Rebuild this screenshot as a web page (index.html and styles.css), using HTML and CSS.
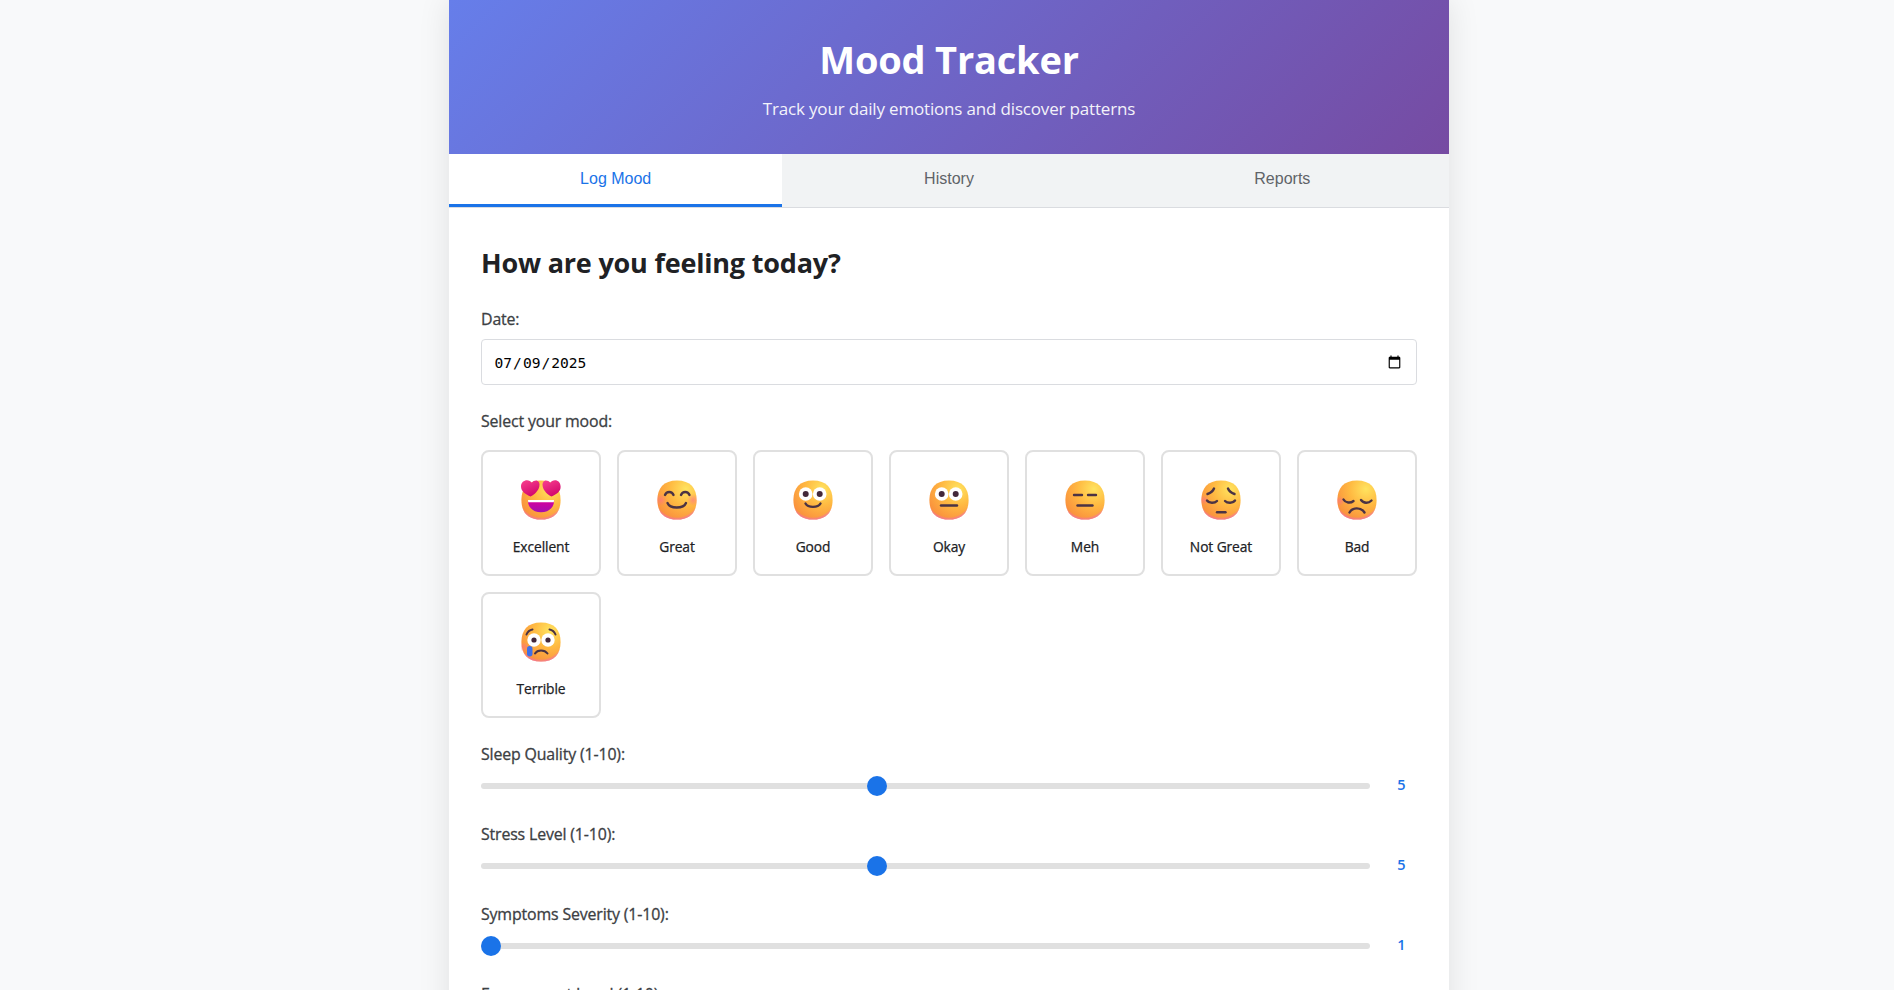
FILE: index.html
```html
<!DOCTYPE html>
<html lang="en">
<head>
  <meta charset="UTF-8">
  <meta name="viewport" content="width=device-width, initial-scale=1.0">
  <title>Mood Tracker</title>
  <link rel="stylesheet" href="styles.css">
</head>
<body>
  <!-- shared gradients and face shape for the mood icons -->
  <svg class="svg-defs" aria-hidden="true">
    <defs>
      <radialGradient id="faceFill" gradientUnits="userSpaceOnUse" cx="29" cy="9" r="36">
        <stop offset="0" stop-color="#ffe35f"/>
        <stop offset="0.45" stop-color="#ffba42"/>
        <stop offset="1" stop-color="#f98a3c"/>
      </radialGradient>
      <radialGradient id="faceRim" gradientUnits="userSpaceOnUse" cx="20" cy="15" r="25.5">
        <stop offset="0.86" stop-color="#f472b0" stop-opacity="0"/>
        <stop offset="1" stop-color="#f06eb4"/>
      </radialGradient>
      <radialGradient id="blush">
        <stop offset="0" stop-color="#ff6f8e" stop-opacity="0.6"/>
        <stop offset="1" stop-color="#ff6f8e" stop-opacity="0"/>
      </radialGradient>
      <linearGradient id="heartFill" x1="0" y1="0" x2="0.5" y2="1">
        <stop offset="0" stop-color="#f9408f"/>
        <stop offset="1" stop-color="#d3086e"/>
      </linearGradient>
      <linearGradient id="mouthFill" x1="0" y1="0" x2="0" y2="1">
        <stop offset="0" stop-color="#d9009a"/>
        <stop offset="1" stop-color="#a30fb0"/>
      </linearGradient>
      <g id="face">
        <path fill="url(#faceFill)" d="M20 .4C33.500 .4 39.600 8 39.600 20 39.600 32 33.500 39.600 20 39.600 6.500 39.600 .4 32 .4 20 .4 8 6.500 .4 20 .4Z"/>
        <path fill="url(#faceRim)" d="M20 .4C33.500 .4 39.600 8 39.600 20 39.600 32 33.500 39.600 20 39.600 6.500 39.600 .4 32 .4 20 .4 8 6.500 .4 20 .4Z"/>
      </g>
    </defs>
  </svg>

  <div class="container">
    <header class="app-header">
      <h1>Mood Tracker</h1>
      <p>Track your daily emotions and discover patterns</p>
    </header>

    <nav class="tabs">
      <button class="tab active">Log Mood</button>
      <button class="tab">History</button>
      <button class="tab">Reports</button>
    </nav>

    <main class="content">
      <h2>How are you feeling today?</h2>

      <div class="form-group date-group">
        <label for="moodDate">Date:</label>
        <input type="date" id="moodDate" value="2025-07-09">
      </div>

      <div class="form-group">
        <label class="mood-label">Select your mood:</label>
        <div class="mood-grid">
          <div class="mood-card">
            <div class="mood-emoji">
              <svg viewBox="0 0 40 40">
                <use href="#face"/>
                <path fill="url(#mouthFill)" d="M7 20H33C33.500 27 28 32.300 20 32.300 12 32.300 6.500 27 7 20Z"/>
                <path fill="#fff" d="M7 20H33L32.800 22.300H7.200Z"/>
                <path fill="url(#heartFill)" d="M9.500 16.500C5 14.500 0 11.500 0 6.500 0 2.500 3 .3 6 .3 8 .3 9.800 1.300 10.800 2.800 12 1.300 13.800 .4 15.500 .6 18 1 19 3.500 18.300 6.500 17.300 11 13.500 14.500 9.500 16.500Z"/>
                <path fill="url(#heartFill)" d="M30.500 16.500C35 14.500 40 11.500 39.600 6.500 39.400 2.500 37 .3 34 .3 32 .3 30.200 1.300 29.200 2.800 28 1.300 26.200 .4 24.500 .6 22 1 21 3.500 21.700 6.500 22.700 11 26.500 14.500 30.500 16.500Z"/>
              </svg>
            </div>
            <span class="mood-name">Excellent</span>
          </div>

          <div class="mood-card">
            <div class="mood-emoji">
              <svg viewBox="0 0 40 40">
                <use href="#face"/>
                <circle cx="4" cy="20" r="6" fill="url(#blush)"/>
                <circle cx="36" cy="20" r="6" fill="url(#blush)"/>
                <g class="feature">
                  <path d="M8 15C9.500 11 15 11 16.500 15"/>
                  <path d="M24 15C25.500 11 31 11 32.500 15"/>
                  <path d="M10.500 23C13 29 26.500 29 29 23"/>
                </g>
              </svg>
            </div>
            <span class="mood-name">Great</span>
          </div>

          <div class="mood-card">
            <div class="mood-emoji">
              <svg viewBox="0 0 40 40">
                <use href="#face"/>
                <circle class="eye" cx="12.700" cy="14" r="6.800"/>
                <circle class="eye" cx="26.700" cy="14" r="6.800"/>
                <circle class="pupil" cx="12.700" cy="14" r="3"/>
                <circle class="pupil" cx="26.700" cy="14" r="3"/>
                <path class="feature" d="M12.500 23.500C15 28 25 28 27.500 23.500"/>
              </svg>
            </div>
            <span class="mood-name">Good</span>
          </div>

          <div class="mood-card">
            <div class="mood-emoji">
              <svg viewBox="0 0 40 40">
                <use href="#face"/>
                <circle class="eye" cx="12.700" cy="14" r="6.800"/>
                <circle class="eye" cx="26.700" cy="14" r="6.800"/>
                <circle class="pupil" cx="12.700" cy="14" r="3"/>
                <circle class="pupil" cx="26.700" cy="14" r="3"/>
                <path class="feature" d="M12 25.500H28"/>
              </svg>
            </div>
            <span class="mood-name">Okay</span>
          </div>

          <div class="mood-card">
            <div class="mood-emoji">
              <svg viewBox="0 0 40 40">
                <use href="#face"/>
                <g class="feature">
                  <path d="M9 15H17"/>
                  <path d="M23 15H31"/>
                  <path d="M12.500 25.500H27.500"/>
                </g>
              </svg>
            </div>
            <span class="mood-name">Meh</span>
          </div>

          <div class="mood-card">
            <div class="mood-emoji">
              <svg viewBox="0 0 40 40">
                <use href="#face"/>
                <circle cx="3" cy="20" r="5" fill="url(#blush)"/>
                <g class="feature">
                  <path d="M13 8.500C12 11 9.500 13 6.500 14"/>
                  <path d="M27 8.500C28 11 30.500 13 33.500 14"/>
                  <path d="M6 20.500C8 23.500 13.500 23.500 16 21"/>
                  <path d="M24 21C26.500 23.500 32 23.500 34 20.500"/>
                  <path d="M16 32.300H24.500"/>
                </g>
              </svg>
            </div>
            <span class="mood-name">Not Great</span>
          </div>

          <div class="mood-card">
            <div class="mood-emoji">
              <svg viewBox="0 0 40 40">
                <use href="#face"/>
                <circle cx="3" cy="21" r="5" fill="url(#blush)"/>
                <g class="feature">
                  <path d="M6.500 19.500C8.500 23 13.500 23.500 16.500 21"/>
                  <path d="M24 20C26.500 23.500 31.500 23.500 34.500 20.500"/>
                  <path d="M12.500 32.500C15.500 27 24 27 27.500 32.500"/>
                </g>
              </svg>
            </div>
            <span class="mood-name">Bad</span>
          </div>

          <div class="mood-card">
            <div class="mood-emoji">
              <svg viewBox="0 0 40 40">
                <use href="#face"/>
                <circle cx="3" cy="25" r="5" fill="url(#blush)"/>
                <circle class="eye" cx="13" cy="18" r="6.700"/>
                <circle class="eye" cx="27" cy="18" r="6.700"/>
                <circle class="pupil" cx="13" cy="18" r="2.600"/>
                <circle class="pupil" cx="27" cy="18" r="2.600"/>
                <g class="feature thin">
                  <path d="M11.500 7.500C8.500 8 6.500 10 5.500 12.500"/>
                  <path d="M28.500 7.500C31.500 8 33.500 10 34.500 12.500"/>
                  <path d="M14 31.500C16.500 27.500 23.500 27.500 26.500 31.500"/>
                </g>
                <rect x="6" y="24" width="5.500" height="10.500" rx="2.700" fill="#3f6fe8"/>
              </svg>
            </div>
            <span class="mood-name">Terrible</span>
          </div>
        </div>
      </div>

      <div class="form-group">
        <label for="sleep">Sleep Quality (1-10):</label>
        <div class="slider-row">
          <input type="range" id="sleep" min="1" max="10" value="5">
          <span class="slider-value">5</span>
        </div>
      </div>

      <div class="form-group">
        <label for="stress">Stress Level (1-10):</label>
        <div class="slider-row">
          <input type="range" id="stress" min="1" max="10" value="5">
          <span class="slider-value">5</span>
        </div>
      </div>

      <div class="form-group">
        <label for="symptoms">Symptoms Severity (1-10):</label>
        <div class="slider-row">
          <input type="range" id="symptoms" min="1" max="10" value="1">
          <span class="slider-value">1</span>
        </div>
      </div>

      <div class="form-group">
        <label for="engagement">Engagement Level (1-10):</label>
        <div class="slider-row">
          <input type="range" id="engagement" min="1" max="10" value="5">
          <span class="slider-value">5</span>
        </div>
      </div>
    </main>
  </div>
</body>
</html>
```

FILE: styles.css
```css
* {
  box-sizing: border-box;
}

body {
  font-family: 'Open Sans', 'Noto Sans', sans-serif;
  margin: 0;
  padding: 0 0 0 4px;
  background: #f8f9fa;
  color: #202124;
  line-height: 1.6;
}

.svg-defs {
  position: absolute;
  width: 0;
  height: 0;
}

.container {
  width: 1000px;
  margin: 0 auto;
  background: #ffffff;
  box-shadow: 0 0 30px rgba(0, 0, 0, 0.1);
}

/* header */
.app-header {
  background: linear-gradient(135deg, #667eea, #764ba2);
  color: #ffffff;
  text-align: center;
  padding: 31px 32px 32px;
}

.app-header h1 {
  margin: 0 0 9px;
  font-size: 38px;
  line-height: 56px;
  font-weight: 700;
  letter-spacing: -0.2px;
}

.app-header p {
  margin: 0;
  font-size: 17px;
  line-height: 26px;
  font-weight: 400;
  letter-spacing: -0.17px;
  opacity: 0.92;
}

/* tabs */
.tabs {
  display: flex;
  background: #f1f3f4;
  border-bottom: 1px solid #dadce0;
}

.tab {
  flex: 1;
  padding: 16px;
  border: none;
  border-bottom: 3px solid transparent;
  background: none;
  font-family: 'Liberation Sans', Arial, sans-serif;
  font-size: 16px;
  color: #5f6368;
}

.tab.active {
  background: #ffffff;
  color: #1a73e8;
  border-bottom-color: #1a73e8;
}

/* log mood form */
.content {
  padding: 32px;
}

.content h2 {
  margin: 0 0 22px;
  font-size: 27px;
  line-height: 45px;
  font-weight: 700;
  letter-spacing: -0.2px;
}

.form-group {
  margin-bottom: 24px;
}

/* Open Sans has no medium cut here, so the stroke thickens the regular */
.form-group label {
  display: block;
  margin-bottom: 8px;
  font-size: 15.900px;
  line-height: 25.6px;
  font-weight: 400;
  color: #3c4043;
  letter-spacing: -0.15px;
  -webkit-text-stroke: 0.3px #3c4043;
}

.date-group label {
  margin-bottom: 6px;
}

.form-group .mood-label {
  margin-bottom: 15px;
}

input[type="date"] {
  display: block;
  width: 100%;
  height: 46.4px;
  padding: 13px 12px 11px 11.500px;
  border: 1px solid #dadce0;
  border-radius: 4px;
  background: #ffffff;
  font-family: 'DejaVu Sans Mono', monospace;
  font-size: 14.600px;
  color: #000000;
}

.mood-grid {
  display: grid;
  grid-template-columns: repeat(auto-fit, minmax(120px, 1fr));
  gap: 16px;
}

.mood-card {
  display: flex;
  flex-direction: column;
  align-items: center;
  padding: 16px;
  border: 2px solid #e0e0e0;
  border-radius: 8px;
  background: #ffffff;
}

.mood-emoji {
  display: flex;
  justify-content: center;
  align-items: center;
  height: 64px;
  margin-bottom: 4px;
}

.mood-emoji svg {
  display: block;
  width: 40px;
  height: 40px;
}

.mood-name {
  font-size: 13.800px;
  line-height: 22.4px;
  font-weight: 400;
  color: #202124;
  letter-spacing: -0.1px;
  -webkit-text-stroke: 0.25px #202124;
}

/* icon details */
.feature {
  fill: none;
  stroke: #4b3344;
  stroke-width: 2.4;
  stroke-linecap: round;
}

.feature.thin {
  stroke-width: 2;
}

.eye {
  fill: #ffffff;
}

.pupil {
  fill: #43283a;
}

/* sliders */
.slider-row {
  display: flex;
  align-items: center;
  gap: 16px;
  height: 21.4px;
  margin: -1px 0 26px;
}

input[type="range"] {
  flex: 1;
  min-width: 0;
  height: 6px;
  margin: 0;
  border-radius: 3px;
  background: #e0e0e0;
  appearance: none;
  -webkit-appearance: none;
}

input[type="range"]::-webkit-slider-thumb {
  width: 20px;
  height: 20px;
  border-radius: 50%;
  background: #1a73e8;
  -webkit-appearance: none;
}

.slider-value {
  min-width: 31px;
  text-align: center;
  font-size: 14.500px;
  line-height: 22.4px;
  font-weight: 600;
  color: #1a73e8;
}
```
